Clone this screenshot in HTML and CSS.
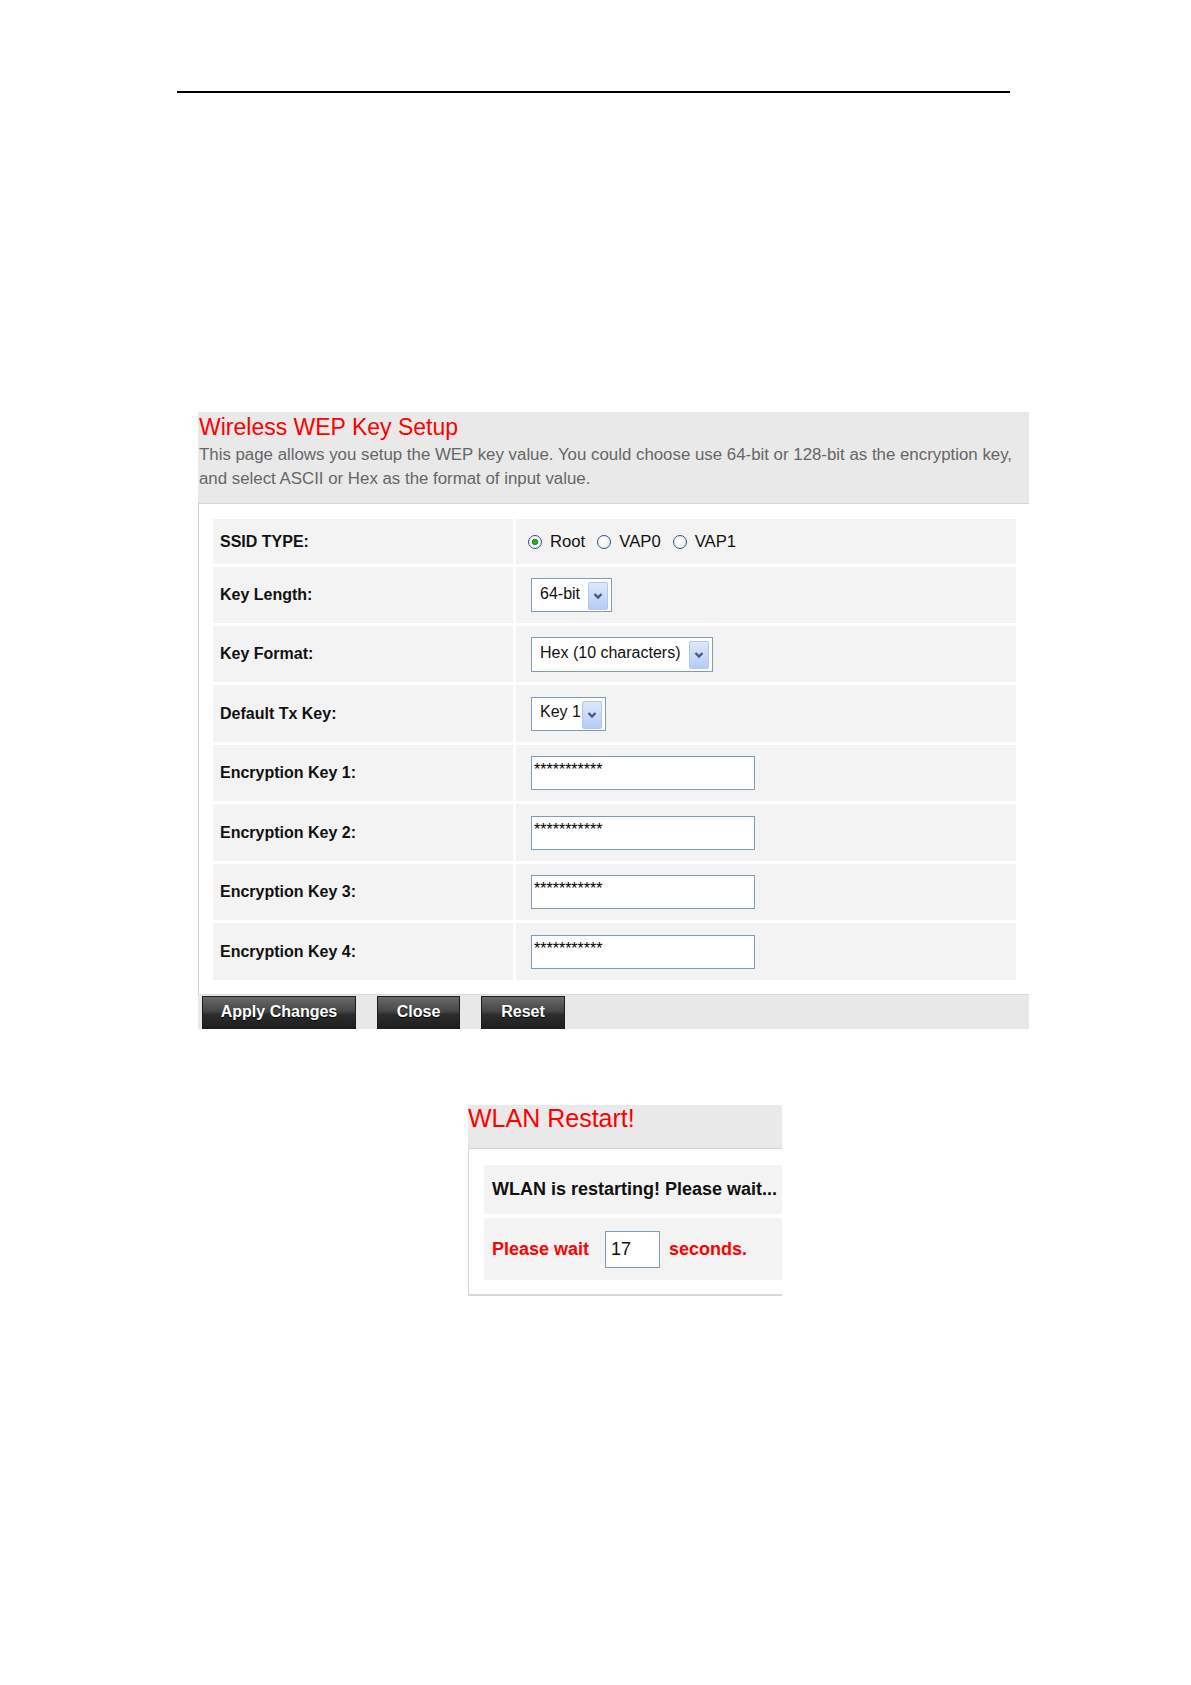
FILE: index.html
```html
<!DOCTYPE html>
<html lang="en">
<head>
    <meta charset="UTF-8">
    <meta name="viewport" content="width=device-width, initial-scale=1.0">
    <title>Wireless WEP Key Setup</title>
    <link rel="stylesheet" href="styles.css">
</head>
<body>
    <div class="page">
        <div class="page-rule"></div>

        <!-- WEP key setup panel -->
        <div class="panel wep-panel">
            <div class="panel-head">
                <h2 class="panel-title">Wireless WEP Key Setup</h2>
                <p class="panel-desc">This page allows you setup the WEP key value. You could choose use 64-bit or 128-bit as the encryption key,<br>and select ASCII or Hex as the format of input value.</p>
            </div>
            <div class="panel-body">
                <div class="form-grid">
                    <div class="cell label-cell">SSID TYPE:</div>
                    <div class="cell value-cell radio-cell">
                        <input type="radio" name="ssid" id="ssid_root" checked>
                        <label for="ssid_root">Root</label>
                        <input type="radio" name="ssid" id="ssid_vap0">
                        <label for="ssid_vap0">VAP0</label>
                        <input type="radio" name="ssid" id="ssid_vap1">
                        <label for="ssid_vap1">VAP1</label>
                    </div>

                    <div class="cell label-cell">Key Length:</div>
                    <div class="cell value-cell">
                        <div class="select select-length">
                            <span class="select-text">64-bit</span>
                            <span class="select-arrow"><svg width="10" height="8" viewBox="0 0 10 8"><path d="M1.5 2 L5 5.5 L8.5 2" fill="none" stroke="#44597f" stroke-width="2.4"/></svg></span>
                        </div>
                    </div>

                    <div class="cell label-cell">Key Format:</div>
                    <div class="cell value-cell">
                        <div class="select select-format">
                            <span class="select-text">Hex (10 characters)</span>
                            <span class="select-arrow"><svg width="10" height="8" viewBox="0 0 10 8"><path d="M1.5 2 L5 5.5 L8.5 2" fill="none" stroke="#44597f" stroke-width="2.4"/></svg></span>
                        </div>
                    </div>

                    <div class="cell label-cell">Default Tx Key:</div>
                    <div class="cell value-cell">
                        <div class="select select-txkey">
                            <span class="select-text">Key 1</span>
                            <span class="select-arrow"><svg width="10" height="8" viewBox="0 0 10 8"><path d="M1.5 2 L5 5.5 L8.5 2" fill="none" stroke="#44597f" stroke-width="2.4"/></svg></span>
                        </div>
                    </div>

                    <div class="cell label-cell">Encryption Key 1:</div>
                    <div class="cell value-cell"><input class="key-input" type="text" value="***********" readonly></div>

                    <div class="cell label-cell">Encryption Key 2:</div>
                    <div class="cell value-cell"><input class="key-input" type="text" value="***********" readonly></div>

                    <div class="cell label-cell">Encryption Key 3:</div>
                    <div class="cell value-cell"><input class="key-input" type="text" value="***********" readonly></div>

                    <div class="cell label-cell">Encryption Key 4:</div>
                    <div class="cell value-cell"><input class="key-input" type="text" value="***********" readonly></div>
                </div>
            </div>
            <div class="button-bar">
                <button type="button" class="btn btn-apply">Apply Changes</button>
                <button type="button" class="btn btn-close">Close</button>
                <button type="button" class="btn btn-reset">Reset</button>
            </div>
        </div>

        <!-- WLAN restart panel -->
        <div class="panel restart-panel">
            <div class="panel-head">
                <h2 class="panel-title">WLAN Restart!</h2>
            </div>
            <div class="panel-body">
                <div class="restart-row restart-msg">WLAN is restarting! Please wait...</div>
                <div class="restart-row restart-wait">
                    <span class="wait-text">Please wait</span>
                    <input class="wait-input" type="text" value="17" readonly>
                    <span class="wait-text">seconds.</span>
                </div>
            </div>
        </div>
    </div>
</body>
</html>
```

FILE: styles.css
```css
/* Reset default browser styles */
* {
    margin: 0;
    padding: 0;
    box-sizing: border-box;
}

body {
    font-family: 'Liberation Sans', Arial, sans-serif;
    background-color: #ffffff;
    color: #000000;
}

.page {
    padding-top: 91px;
    padding-bottom: 388px;
}

/* Header rule of the document page */
.page-rule {
    margin-left: 177px;
    width: 833px;
    height: 2px;
    background-color: #000000;
}

/* Panel styles */
.panel-head {
    background-color: #e9e9e9;
    border-bottom: 1px solid #d4d4d4;
}

.panel-title {
    color: #ff0000;
    font-weight: normal;
}

.panel-body {
    background-color: #ffffff;
    border-left: 1px solid #d3d3d3;
}

/* WEP panel */
.wep-panel {
    margin-top: 319px;
    margin-left: 198px;
    width: 831px;
}

.wep-panel .panel-head {
    padding: 1px 0 12px 1px;
}

.wep-panel .panel-title {
    font-size: 23px;
    line-height: 28px;
}

.panel-desc {
    margin-top: 2px;
    font-size: 16.85px;
    line-height: 24px;
    color: #666666;
    white-space: nowrap;
}

.wep-panel .panel-body {
    padding: 15px 13px 14px 14px;
}

.form-grid {
    display: grid;
    grid-template-columns: 300px 500px;
    grid-template-rows: 45px 56px 56px 57px 56px 57px 56px 57px;
    gap: 3px;
}

.cell {
    background-color: #f3f3f3;
    display: flex;
    align-items: center;
}

.label-cell {
    padding-left: 7px;
    font-size: 16px;
    font-weight: bold;
    color: #111111;
}

.value-cell {
    padding-left: 15px;
    font-size: 16.7px;
}

/* Radio buttons */
.radio-cell {
    padding-left: 12px;
}

.radio-cell input[type="radio"] {
    appearance: none;
    -webkit-appearance: none;
    width: 14px;
    height: 14px;
    border: 1px solid #2a5785;
    border-radius: 50%;
    background: radial-gradient(circle at 40% 40%, #ffffff 0, #e6e6e0 100%);
    margin-right: 8px;
    flex-shrink: 0;
}

.radio-cell input[type="radio"]:checked {
    background: radial-gradient(circle, #35b335 0, #1f9b1f 2.8px, #ffffff 3.6px, #e6e6e0 100%);
}

.radio-cell label {
    margin-right: 12px;
    color: #111111;
}

/* Drop down boxes */
.select {
    display: flex;
    align-items: center;
    justify-content: space-between;
    height: 34px;
    border: 1px solid #7f9db9;
    background-color: #ffffff;
    padding: 0 3px 0 8px;
    font-size: 16px;
}

.select-length {
    width: 81px;
}

.select-format {
    width: 182px;
    height: 35px;
}

.select-txkey {
    width: 75px;
}

.select-text {
    color: #111111;
    margin-top: -3px;
}

.select-arrow {
    width: 20px;
    height: 28px;
    border: 1px solid #b2c6ef;
    border-radius: 2px;
    background: linear-gradient(#dde8fd, #b6cbf6);
    display: flex;
    align-items: center;
    justify-content: center;
    margin-top: 2px;
}

/* Key inputs */
.key-input {
    width: 224px;
    height: 34px;
    border: 1px solid #7f9db9;
    padding: 0 0 6px 2px;
    font-family: 'Liberation Sans', Arial, sans-serif;
    font-size: 16px;
    color: #000000;
    background-color: #ffffff;
    outline: none;
}

/* Button bar */
.button-bar {
    height: 35px;
    background-color: #e8e8e8;
    border-top: 1px solid #dadada;
    padding: 1px 0 0 4px;
    display: flex;
    gap: 21px;
    overflow: hidden;
}

.btn {
    height: 34px;
    border: 1px solid #1b1b1b;
    background: linear-gradient(#6b6b6b, #454545 45%, #2c2c2c 55%, #1e1e1e);
    color: #ffffff;
    font-family: 'Liberation Sans', Arial, sans-serif;
    font-size: 16px;
    font-weight: bold;
    text-shadow: 0 1px 1px #000000;
    padding-bottom: 3px;
    cursor: pointer;
}

.btn-apply {
    width: 154px;
}

.btn-close {
    width: 83px;
}

.btn-reset {
    width: 84px;
}

/* WLAN restart panel */
.restart-panel {
    margin-top: 76px;
    margin-left: 468px;
    width: 314px;
    overflow: hidden;
}

.restart-panel .panel-head {
    height: 44px;
}

.restart-panel .panel-title {
    font-size: 25px;
    line-height: 26px;
}

.restart-panel .panel-body {
    padding: 16px 0 14px 15px;
    border-bottom: 2px solid #d8d8d8;
}

.restart-row {
    background-color: #f3f3f3;
    display: flex;
    align-items: center;
    padding-left: 8px;
    font-size: 18px;
    font-weight: bold;
    white-space: nowrap;
}

.restart-msg {
    height: 49px;
    margin-bottom: 4px;
    color: #111111;
}

.restart-wait {
    height: 62px;
}

.wait-text {
    color: #ff0000;
}

.wait-input {
    width: 55px;
    height: 37px;
    margin: 0 9px 0 16px;
    border: 1px solid #7f9db9;
    padding-left: 5px;
    font-family: 'Liberation Sans', Arial, sans-serif;
    font-size: 18px;
    color: #111111;
    outline: none;
}
```
